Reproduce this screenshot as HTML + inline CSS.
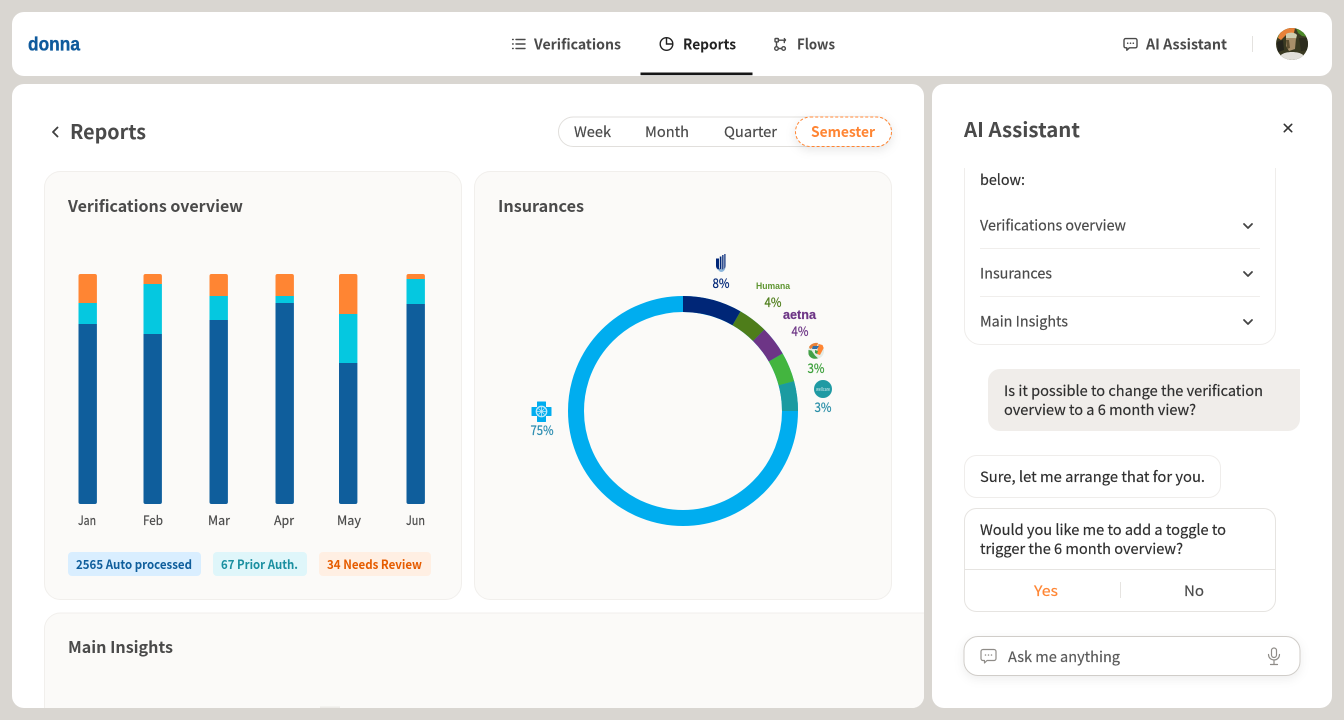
<!DOCTYPE html>
<html lang="en"><head><meta charset="utf-8"><title>Reports</title>
<style>
html,body{margin:0;padding:0;width:1344px;height:720px;overflow:hidden;background:#d9d6d1}
svg{display:block}
text{font-family:"Noto Sans CJK JP","Liberation Sans",sans-serif;font-size:14.5px;color:#4a4a4a;fill:currentColor;stroke:currentColor;stroke-width:.18}
.b{font-weight:700;stroke-width:0}
.s{font-size:12.5px}
.p{font-size:13px;stroke-width:.25}
.d{color:#2f2f2f}
.ic{fill:none;stroke:#4a4a4a;stroke-width:1.4;stroke-linecap:round;stroke-linejoin:round}
</style></head><body>
<svg width="1344" height="720" viewBox="0 0 1344 720" xmlns="http://www.w3.org/2000/svg">
<defs>
<clipPath id="main"><rect x="12" y="84" width="912" height="624" rx="12"/></clipPath>
<clipPath id="chat"><rect x="940" y="168" width="380" height="500"/></clipPath>
<clipPath id="av"><circle cx="1292" cy="44" r="16"/></clipPath>
<filter id="sh" x="-30%" y="-50%" width="160%" height="220%"><feDropShadow dx="0" dy="3" stdDeviation="5" flood-color="#000" flood-opacity=".10"/></filter>
<filter id="sh2" x="-10%" y="-40%" width="120%" height="200%"><feDropShadow dx="0" dy="3" stdDeviation="5" flood-color="#000" flood-opacity=".07"/></filter>
</defs>
<rect width="1344" height="720" fill="#d9d6d1"/>

<!-- header -->
<rect x="12" y="12" width="1320" height="64" rx="12" fill="#fff"/>
<text x="28" y="50.500" style="font-family:'Liberation Sans',sans-serif;font-weight:700;font-size:19px;color:#0f5a9c;stroke-width:.35" textLength="52" lengthAdjust="spacingAndGlyphs">donna</text>

<g class="ic"><path d="M516 39.500h9M516 44h9M516 48.500h9"/><path d="M512.600 39.500h.6M512.600 44h.6M512.600 48.500h.6"/></g>
<text x="534" y="49.500" class="b" textLength="87" lengthAdjust="spacingAndGlyphs">Verifications</text>

<g fill="none" stroke="#222" stroke-width="1.400"><circle cx="666.500" cy="44" r="6.300"/><path d="M666.500 37.700V44h6.300"/></g>
<text x="683" y="49.500" class="b" style="color:#222" textLength="53" lengthAdjust="spacingAndGlyphs">Reports</text>
<rect x="640.500" y="72.500" width="112" height="2.700" fill="#161616"/>

<g class="ic" stroke-width="1.300"><rect x="775" y="38.500" width="3.400" height="3.400" rx=".8"/><circle cx="776.500" cy="48.500" r="1.800"/><circle cx="783.600" cy="48.500" r="1.800"/><path d="M778.500 40.200h5.800v2.400M778.500 48.500h3.200M776.500 42v4.600M784.300 38.600l1.200 1.400-1.200 1.400"/></g>
<text x="797" y="49.500" class="b" textLength="38" lengthAdjust="spacingAndGlyphs">Flows</text>

<g class="ic" stroke-width="1.200"><path d="M1125.600 38.600h9.800a1.600 1.600 0 0 1 1.600 1.600v6a1.600 1.600 0 0 1-1.600 1.600h-6l-2.600 2.400v-2.400h-1.200a1.600 1.600 0 0 1-1.600-1.600v-6a1.600 1.600 0 0 1 1.600-1.600z"/></g>
<g fill="#4a4a4a"><circle cx="1127.700" cy="43.200" r=".8"/><circle cx="1130.500" cy="43.200" r=".8"/><circle cx="1133.300" cy="43.200" r=".8"/></g>
<text x="1146" y="49.500" class="b" textLength="81" lengthAdjust="spacingAndGlyphs">AI Assistant</text>
<rect x="1252" y="36" width="1" height="16" fill="#e4e2df"/>
<g clip-path="url(#av)">
<rect x="1276" y="28" width="32" height="32" fill="#3a3a22"/>
<path d="M1276 28h12l-2 7-6 2-4 2z" fill="#5f7d28"/>
<path d="M1281 30l8-2h6l-1 5-8 2-5 5-3-2z" fill="#e8823a"/>
<path d="M1296 28h12v9l-6-1-4-3z" fill="#4c8a28"/>
<path d="M1277 42l6-2 1 10-6 2z" fill="#24241c"/>
<path d="M1299 38h9v12l-7 1z" fill="#2c2c1e"/>
<path d="M1286 34c3-2 9-2 11 1l-1 4-10-1z" fill="#cfcdb0"/>
<path d="M1286 38h10l-1 11-6 2-3-5z" fill="#a88f6a"/>
<path d="M1286 40h3l1 8-3 1z" fill="#5e5032"/>
<path d="M1281 55c4-4 18-4 22 0v6h-22z" fill="#e2e0da"/>
</g>

<!-- main panel -->
<rect x="12" y="84" width="912" height="624" rx="12" fill="#fff"/>
<path d="M57.500 127.500 53 132l4.500 4.500" fill="none" stroke="#3f3f3f" stroke-width="1.800" stroke-linecap="round" stroke-linejoin="round"/>
<text x="70" y="139" class="b" style="font-size:20px" textLength="76" lengthAdjust="spacingAndGlyphs">Reports</text>

<rect x="558.500" y="117" width="333" height="29.500" rx="14.700" fill="#fff" stroke="#e1dfdc"/>
<text x="574" y="137" textLength="37" lengthAdjust="spacingAndGlyphs">Week</text>
<text x="645" y="137" textLength="44" lengthAdjust="spacingAndGlyphs">Month</text>
<text x="724" y="137" textLength="53" lengthAdjust="spacingAndGlyphs">Quarter</text>
<rect x="795.500" y="117" width="96" height="29.500" rx="14.700" fill="#fff" stroke="#ff8533" stroke-dasharray="3 2" filter="url(#sh)"/>
<text x="811" y="137" class="b" style="color:#ff8533" textLength="64" lengthAdjust="spacingAndGlyphs">Semester</text>

<g clip-path="url(#main)">
<rect x="44.500" y="171.500" width="417" height="428" rx="16" fill="#fbfaf8" stroke="#f1efec"/>
<rect x="474.500" y="171.500" width="417" height="428" rx="16" fill="#fbfaf8" stroke="#f1efec"/>
<rect x="44.500" y="613" width="920" height="140" rx="16" fill="#fbfaf8" stroke="#f1efec"/>
<rect x="320" y="706.500" width="20" height="1.500" fill="#eeece9"/>
</g>
<text x="68" y="212" class="b" style="font-size:16px" textLength="175" lengthAdjust="spacingAndGlyphs">Verifications overview</text>
<text x="498" y="212" class="b" style="font-size:16px" textLength="86" lengthAdjust="spacingAndGlyphs">Insurances</text>
<text x="68" y="653" class="b" style="font-size:16px" textLength="105" lengthAdjust="spacingAndGlyphs">Main Insights</text>

<!-- bars -->
<g>
<path d="M78.500 324h18.400v178a2 2 0 0 1-2 2H80.500a2 2 0 0 1-2-2z" fill="#0f5e9c"/><rect x="78.500" y="303" width="18.400" height="21" fill="#05c8e0"/><path d="M78.500 303v-27a2 2 0 0 1 2-2h14.400a2 2 0 0 1 2 2v27z" fill="#ff8533"/>
<path d="M143.500 334h18.400v168a2 2 0 0 1-2 2h-14.400a2 2 0 0 1-2-2z" fill="#0f5e9c"/><rect x="143.500" y="284" width="18.400" height="50" fill="#05c8e0"/><path d="M143.500 284v-8a2 2 0 0 1 2-2h14.400a2 2 0 0 1 2 2v8z" fill="#ff8533"/>
<path d="M209.500 320h18.400v182a2 2 0 0 1-2 2h-14.400a2 2 0 0 1-2-2z" fill="#0f5e9c"/><rect x="209.500" y="296" width="18.400" height="24" fill="#05c8e0"/><path d="M209.500 296v-20a2 2 0 0 1 2-2h14.400a2 2 0 0 1 2 2v20z" fill="#ff8533"/>
<path d="M275.500 303h18.400v199a2 2 0 0 1-2 2h-14.400a2 2 0 0 1-2-2z" fill="#0f5e9c"/><rect x="275.500" y="296" width="18.400" height="7" fill="#05c8e0"/><path d="M275.500 296v-20a2 2 0 0 1 2-2h14.400a2 2 0 0 1 2 2v20z" fill="#ff8533"/>
<path d="M339 363h18.400v139a2 2 0 0 1-2 2H341a2 2 0 0 1-2-2z" fill="#0f5e9c"/><rect x="339" y="314" width="18.400" height="49" fill="#05c8e0"/><path d="M339 314v-38a2 2 0 0 1 2-2h14.400a2 2 0 0 1 2 2v38z" fill="#ff8533"/>
<path d="M406.500 304h18.400v198a2 2 0 0 1-2 2h-14.400a2 2 0 0 1-2-2z" fill="#0f5e9c"/><rect x="406.500" y="279" width="18.400" height="25" fill="#05c8e0"/><path d="M406.500 279v-3a2 2 0 0 1 2-2h14.400a2 2 0 0 1 2 2v3z" fill="#ff8533"/>
</g>
<text x="78" y="525" class="s" textLength="18" lengthAdjust="spacingAndGlyphs">Jan</text>
<text x="143" y="525" class="s" textLength="20" lengthAdjust="spacingAndGlyphs">Feb</text>
<text x="208" y="525" class="s" textLength="22" lengthAdjust="spacingAndGlyphs">Mar</text>
<text x="274" y="525" class="s" textLength="20" lengthAdjust="spacingAndGlyphs">Apr</text>
<text x="337" y="525" class="s" textLength="24" lengthAdjust="spacingAndGlyphs">May</text>
<text x="406" y="525" class="s" textLength="19" lengthAdjust="spacingAndGlyphs">Jun</text>
<rect x="68" y="552" width="133" height="24" rx="4" fill="#d9eeff"/>
<text x="76" y="569" class="b s" style="color:#0f5e9c" textLength="116" lengthAdjust="spacingAndGlyphs">2565 Auto processed</text>
<rect x="213" y="552" width="94" height="24" rx="4" fill="#dff6fa"/>
<text x="221" y="569" class="b s" style="color:#1a8fa0" textLength="77" lengthAdjust="spacingAndGlyphs">67 Prior Auth.</text>
<rect x="319" y="552" width="112" height="24" rx="4" fill="#ffefe3"/>
<text x="327" y="569" class="b s" style="color:#e65c00" textLength="95" lengthAdjust="spacingAndGlyphs">34 Needs Review</text>

<!-- donut -->
<circle cx="683" cy="411" r="107" fill="none" stroke="#00adef" stroke-width="16"/>
<g fill="none" stroke-width="16">
<path d="M683 304A107 107 0 0 1 736.500 318.300" stroke="#002677"/>
<path d="M736.500 318.300A107 107 0 0 1 758.700 335.300" stroke="#4e7d1a"/>
<path d="M758.700 335.300A107 107 0 0 1 775.700 357.500" stroke="#6d3586"/>
<path d="M775.700 357.500A107 107 0 0 1 786.400 383.300" stroke="#43b53f"/>
<path d="M786.400 383.300A107 107 0 0 1 790 411" stroke="#1b9ba1"/>
</g>

<!-- UHC -->
<path d="M716 258.500h3v9.500l2 2.800c-2.500-.3-5-2-5-5z" fill="#002677"/>
<path d="M719.800 256.500h1.600v13.600l-1.600-1.600zM722.200 255h1.300v15l-1.300.8zM724.300 254h1.200v11.500c0 1.800-.4 3-1.200 3.800z" fill="#002677"/>
<path d="M717.500 268.500c2 1.600 6 1.600 8-1-.6 3-2.500 4.500-4.200 4.500s-3-1.500-3.800-3.500z" fill="#8db7dc"/>
<text x="721" y="288" text-anchor="middle" class="p" style="color:#002677" textLength="17" lengthAdjust="spacingAndGlyphs">8%</text>

<text x="756" y="289" style="font-family:'Liberation Sans',sans-serif;font-weight:700;font-size:9px;color:#5f9632;stroke-width:0" textLength="34" lengthAdjust="spacingAndGlyphs">Humana</text>
<text x="773" y="307" text-anchor="middle" class="p" style="color:#4e7d1a" textLength="17" lengthAdjust="spacingAndGlyphs">4%</text>
<text x="783" y="319" style="font-family:'Liberation Sans',sans-serif;font-weight:700;font-size:13px;color:#6d3586;stroke-width:.2" textLength="33" lengthAdjust="spacingAndGlyphs">aetna</text>
<text x="800" y="336" text-anchor="middle" class="p" style="color:#6d3586" textLength="17" lengthAdjust="spacingAndGlyphs">4%</text>

<circle cx="816" cy="351" r="8" fill="#e4ece6"/>
<path d="M809 347c2-3.500 6-4.500 9-4l-1 3-7 3z" fill="#e8823a"/>
<path d="M818.500 344l4 1 1.200 3-3.700 7-3-1z" fill="#ff8533"/>
<path d="M808.500 350l3 .5 3.500 5 3 2.700c-4 1.500-8 0-9.500-4z" fill="#43a047"/>
<path d="M813 346h6l-2 3h-5z" fill="#2f6fa8"/>
<path d="M815 350l3 1-1 3-2-1z" fill="#43a047"/>
<text x="816" y="373" text-anchor="middle" class="p" style="color:#3ba03a" textLength="17" lengthAdjust="spacingAndGlyphs">3%</text>

<circle cx="823" cy="389" r="9" fill="#1f9aa3"/>
<text x="823" y="391" text-anchor="middle" style="font-size:5px;color:#d7eef0;stroke-width:0" textLength="14" lengthAdjust="spacingAndGlyphs">wellcare</text>
<text x="823" y="412" text-anchor="middle" class="p" style="color:#2a8fa8" textLength="17" lengthAdjust="spacingAndGlyphs">3%</text>

<path d="M537.500 402h8v5.500h5.500v8h-5.500v6h-8v-6H532v-8h5.500z" fill="#00adef" stroke="#00adef" stroke-linejoin="round"/>
<circle cx="541.500" cy="411.500" r="5.200" fill="none" stroke="#bfe9fa" stroke-width="1.300"/>
<path d="M538.500 408.500l6 6M544.500 408.500l-6 6M541.500 406.500v10M536.500 411.500h10" stroke="#bfe9fa" stroke-width=".8" fill="none"/>
<text x="542" y="435" text-anchor="middle" class="p" style="color:#2a8cb0" textLength="23" lengthAdjust="spacingAndGlyphs">75%</text>

<!-- right panel -->
<rect x="932" y="84" width="400" height="624" rx="12" fill="#fff"/>
<text x="964" y="137" class="b" style="font-size:20px" textLength="116" lengthAdjust="spacingAndGlyphs">AI Assistant</text>
<path d="M1284.300 124.300l7.400 7.400M1291.700 124.300l-7.400 7.400" stroke="#333" stroke-width="1.600" stroke-linecap="round"/>

<g clip-path="url(#chat)">
<rect x="964.500" y="120" width="311" height="224.500" rx="16" fill="#fff" stroke="#efedeb"/>
</g>
<text x="980" y="185" class="d" textLength="45" lengthAdjust="spacingAndGlyphs">below:</text>
<text x="980" y="230.500" textLength="146" lengthAdjust="spacingAndGlyphs">Verifications overview</text>
<rect x="980" y="248" width="280" height="1" fill="#f0eeec"/>
<text x="980" y="278.500" textLength="72" lengthAdjust="spacingAndGlyphs">Insurances</text>
<rect x="980" y="296" width="280" height="1" fill="#f0eeec"/>
<text x="980" y="326.500" textLength="88" lengthAdjust="spacingAndGlyphs">Main Insights</text>
<g fill="none" stroke="#444" stroke-width="1.800" stroke-linecap="round" stroke-linejoin="round">
<path d="M1244 224l4 4 4-4"/><path d="M1244 272l4 4 4-4"/><path d="M1244 320l4 4 4-4"/>
</g>

<path d="M1000 369h300v50a12 12 0 0 1-12 12h-288a12 12 0 0 1-12-12v-38a12 12 0 0 1 12-12z" fill="#f0edea"/>
<text x="1004" y="396" class="d" textLength="259" lengthAdjust="spacingAndGlyphs">Is it possible to change the verification</text>
<text x="1004" y="415" class="d" textLength="192" lengthAdjust="spacingAndGlyphs">overview to a 6 month view?</text>

<rect x="964.500" y="455.500" width="256" height="42" rx="12" fill="#fff" stroke="#efedeb"/>
<text x="980" y="482" class="d" textLength="225" lengthAdjust="spacingAndGlyphs">Sure, let me arrange that for you.</text>

<rect x="964.500" y="508.500" width="311" height="103" rx="12" fill="#fff" stroke="#e6e4e1"/>
<text x="980" y="535" class="d" textLength="246" lengthAdjust="spacingAndGlyphs">Would you like me to add a toggle to</text>
<text x="980" y="554" class="d" textLength="203" lengthAdjust="spacingAndGlyphs">trigger the 6 month overview?</text>
<rect x="965" y="569" width="310" height="1" fill="#e6e4e1"/>
<text x="1034" y="596" style="color:#ff8533" textLength="24" lengthAdjust="spacingAndGlyphs">Yes</text>
<rect x="1120" y="582" width="1" height="16" fill="#e6e4e1"/>
<text x="1184" y="596" textLength="20" lengthAdjust="spacingAndGlyphs">No</text>

<rect x="964" y="636.500" width="336" height="39" rx="14" fill="#fff" stroke="#d0cdc9" filter="url(#sh2)"/>
<path d="M983 649.500h11a2 2 0 0 1 2 2v7a2 2 0 0 1-2 2h-7l-2.500 2.500v-2.500H983a2 2 0 0 1-2-2v-7a2 2 0 0 1 2-2z" fill="none" stroke="#8f8c88" stroke-width="1.200" stroke-linejoin="round"/>
<g fill="#8f8c88"><circle cx="985.500" cy="655" r=".8"/><circle cx="988.500" cy="655" r=".8"/><circle cx="991.500" cy="655" r=".8"/></g>
<text x="1008" y="662" style="color:#5a5a5a" textLength="112" lengthAdjust="spacingAndGlyphs">Ask me anything</text>
<g fill="none" stroke="#8f8c88" stroke-width="1.200" stroke-linecap="round"><rect x="1271.500" y="648" width="5" height="9.500" rx="2.500"/><path d="M1268.500 654.500a5.500 5.500 0 0 0 11 0M1274 660v4M1270.500 664.500h7"/></g>
</svg>
</body></html>
